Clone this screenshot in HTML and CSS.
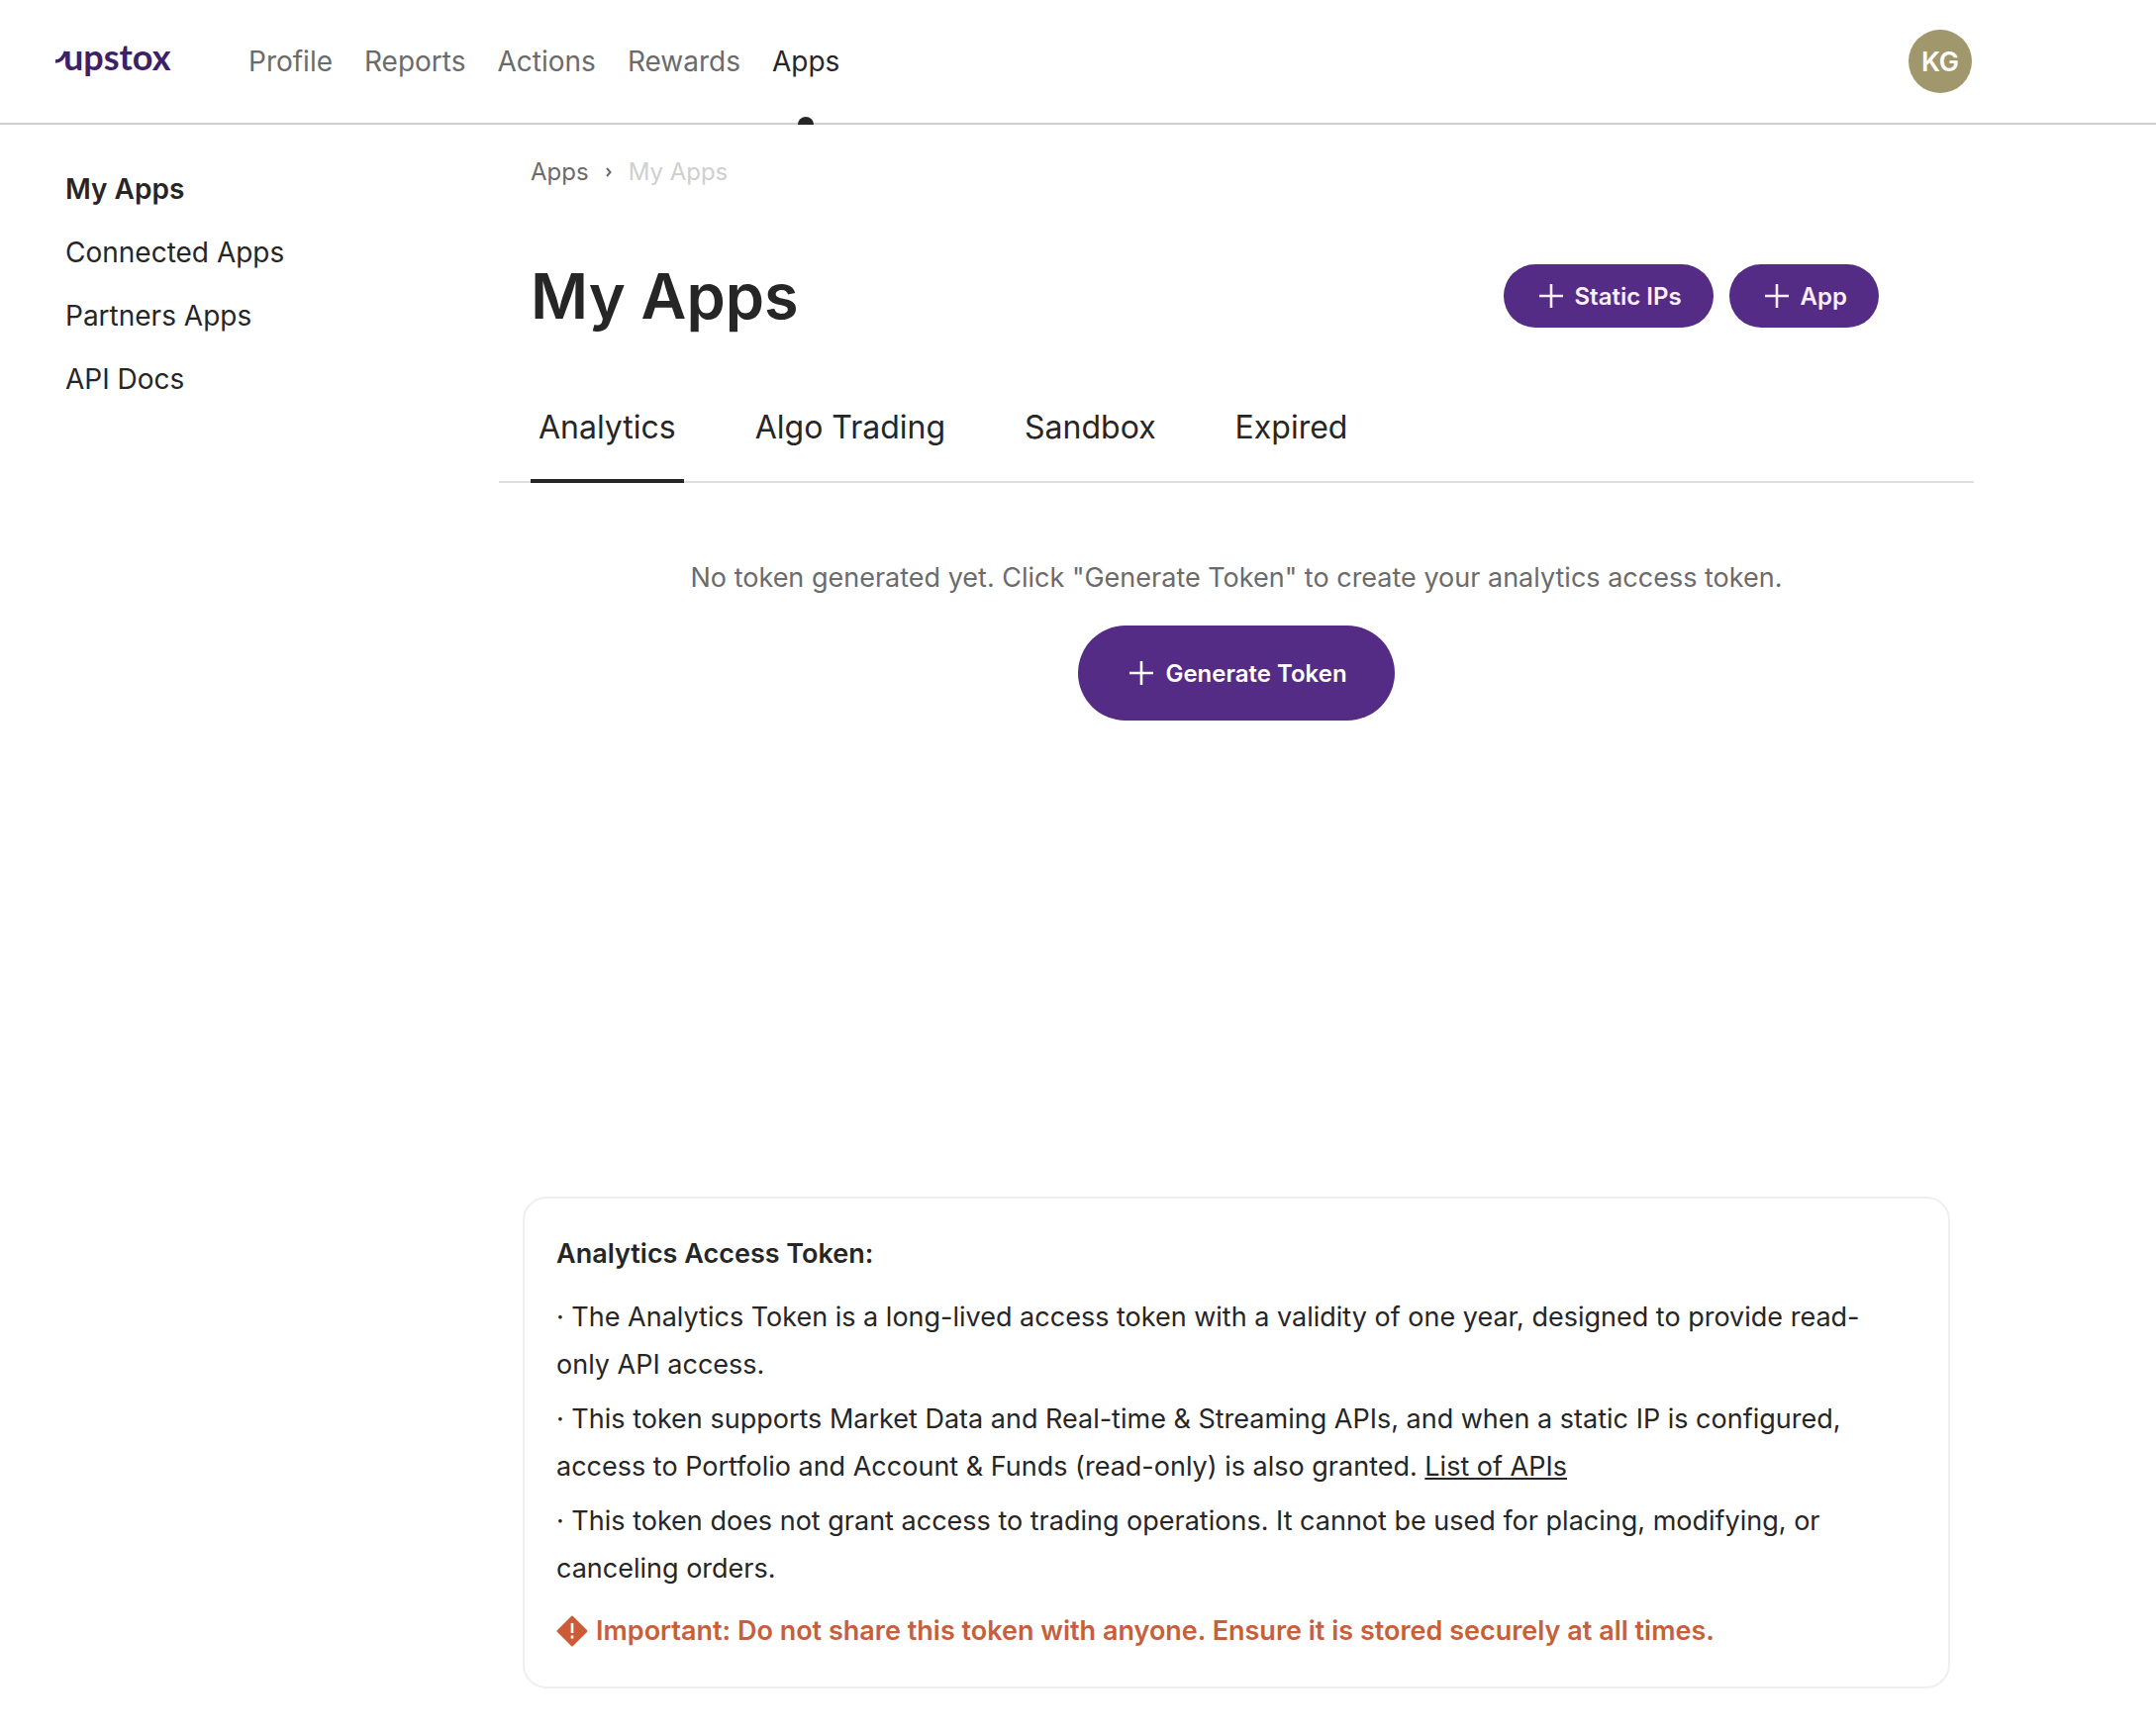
FILE: index.html
```html
<!DOCTYPE html>
<html lang="en">
<head>
  <meta charset="UTF-8" />
  <meta name="viewport" content="width=device-width, initial-scale=1.0"/>
  <title>My Apps - Upstox</title>
  <link rel="stylesheet" href="styles.css">
</head>
<body>

  <header class="topbar">
    <a href="#" class="logo" aria-label="upstox home">
      <svg width="128" height="56" viewBox="0 0 128 56">
        <path d="M1 28 C6.5 28 9.5 24 11.5 18" fill="none" stroke="#3c2167" stroke-width="3.6" />
        <text x="9" y="37" class="logo-text">upstox</text>
      </svg>
    </a>
    <nav class="main-nav">
      <a href="#">Profile</a>
      <a href="#">Reports</a>
      <a href="#">Actions</a>
      <a href="#">Rewards</a>
      <a href="#" class="active">Apps</a>
    </nav>
    <button type="button" class="avatar">KG</button>
  </header>

  <div class="page">
    <aside class="sidebar">
      <a href="#" class="current">My Apps</a>
      <a href="#">Connected Apps</a>
      <a href="#">Partners Apps</a>
      <a href="#">API Docs</a>
    </aside>

    <main class="content">
      <nav class="breadcrumb">
        <a href="#">Apps</a>
        <svg width="6" height="10" viewBox="0 0 6 10"><path d="M1 1 L4.5 5 L1 9" fill="none" stroke="#6b6b6b" stroke-width="2" /></svg>
        <span>My Apps</span>
      </nav>

      <div class="title-row">
        <h1>My Apps</h1>
        <div class="actions">
          <button type="button" class="btn">
            <svg class="plus" width="24" height="24" viewBox="0 0 24 24"><path d="M12 0 V24 M0 12 H24" /></svg>
            Static IPs
          </button>
          <button type="button" class="btn">
            <svg class="plus" width="24" height="24" viewBox="0 0 24 24"><path d="M12 0 V24 M0 12 H24" /></svg>
            App
          </button>
        </div>
      </div>

      <div class="tabs" role="tablist">
        <button type="button" role="tab" class="tab selected" aria-selected="true">Analytics</button>
        <button type="button" role="tab" class="tab">Algo Trading</button>
        <button type="button" role="tab" class="tab">Sandbox</button>
        <button type="button" role="tab" class="tab">Expired</button>
      </div>

      <section class="panel">
        <p>No token generated yet. Click "Generate Token" to create your analytics access token.</p>
        <button type="button" class="btn btn-large">
          <svg class="plus" width="24" height="24" viewBox="0 0 24 24"><path d="M12 0 V24 M0 12 H24" /></svg>
          Generate Token
        </button>
      </section>

      <section class="info-card">
        <h2>Analytics Access Token:</h2>
        <p>· The Analytics Token is a long-lived access token with a validity of one year, designed to provide read-only API access.</p>
        <p>· This token supports Market Data and Real-time &amp; Streaming APIs, and when a static IP is configured, access to Portfolio and Account &amp; Funds (read-only) is also granted. <a href="#">List of APIs</a></p>
        <p>· This token does not grant access to trading operations. It cannot be used for placing, modifying, or canceling orders.</p>
        <div class="warning">
          <svg width="32" height="32" viewBox="0 0 32 32">
            <path d="M16 1.5 L30.5 16 L16 30.5 L1.5 16 Z" fill="#cb5c37" stroke="#cb5c37" stroke-width="2" stroke-linejoin="round" />
            <path d="M16 8 V18 M16 20.5 V23.5" stroke="#fff" stroke-width="2.6" />
          </svg>
          Important: Do not share this token with anyone. Ensure it is stored securely at all times.
        </div>
      </section>
    </main>
  </div>

</body>
</html>
```

FILE: styles.css
```css
* {
  box-sizing: border-box;
}

body {
  margin: 0;
  font-family: Inter, "Liberation Sans", sans-serif;
  font-size: 27px;
  color: #262626;
  background: #fff;
}

a {
  color: inherit;
  text-decoration: none;
}

button {
  font-family: inherit;
  border: none;
  cursor: pointer;
}

/* Top bar */
.topbar {
  display: flex;
  align-items: center;
  height: 126px;
  padding: 0 186px 0 55px;
  border-bottom: 2px solid #cfcfcf;
}

.logo {
  display: flex;
  width: 196px;
}

.logo-text {
  font-family: Lato, sans-serif;
  font-size: 36px;
  font-weight: 700;
  fill: #3c2167;
}

.main-nav {
  display: flex;
  flex: 1;
  gap: 32px;
  font-size: 28px;
  color: #6b6b6b;
}

.main-nav a {
  position: relative;
  line-height: 124px;
}

.main-nav .active {
  color: #262626;
}

/* half dot sitting on the header border */
.main-nav .active::after {
  content: "";
  position: absolute;
  left: 50%;
  bottom: -2px;
  width: 16px;
  height: 8px;
  margin-left: -8px;
  border-radius: 8px 8px 0 0;
  background: #262626;
}

.avatar {
  width: 64px;
  height: 64px;
  padding: 0;
  border-radius: 50%;
  background: #a0976c;
  color: #fff;
  font-size: 27px;
  font-weight: 600;
}

/* Page layout */
.page {
  display: grid;
  grid-template-columns: 504px 1fr;
  padding-right: 184px;
}

.sidebar {
  display: flex;
  flex-direction: column;
  padding: 33px 0 0 66px;
  font-size: 28px;
  line-height: 64px;
}

.sidebar .current {
  font-weight: 600;
}

.breadcrumb {
  display: flex;
  align-items: center;
  gap: 17px;
  padding: 32px 0 0 32px;
  line-height: 32px;
  font-size: 24px;
  color: #6b6b6b;
}

.breadcrumb span {
  color: #cfcfcf;
}

.title-row {
  display: flex;
  align-items: center;
  justify-content: space-between;
  padding: 64px 96px 0 32px;
}

h1 {
  margin: 0;
  font-size: 63px;
  font-weight: 600;
  line-height: 90px;
}

.actions {
  display: flex;
  gap: 16px;
}

.btn {
  display: flex;
  align-items: center;
  gap: 12px;
  height: 64px;
  padding: 0 32px 0 36px;
  border-radius: 48px;
  background: #542b85;
  color: #fceefb;
  font-size: 24px;
  font-weight: 600;
}

.btn-large {
  height: 96px;
  padding: 0 48px 0 52px;
  color: #fff;
}

.plus {
  fill: none;
  stroke: currentColor;
  stroke-width: 2.6;
}

/* Tabs */
.tabs {
  display: flex;
  gap: 64px;
  padding: 0 32px;
  margin-top: 34px;
  border-bottom: 2px solid #dedede;
}

.tab {
  height: 110px;
  margin-bottom: -2px;
  padding: 0 8px;
  border-bottom: 4px solid transparent;
  background: none;
  color: #262626;
  font-size: 32px;
}

.tab.selected {
  border-bottom-color: #262626;
}

.panel {
  display: flex;
  flex-direction: column;
  align-items: center;
  gap: 24px;
  min-height: 721px;
  padding-top: 72px;
}

.panel p {
  margin: 0;
  line-height: 48px;
  color: #6b6b6b;
}

/* Info card */
.info-card {
  margin: 0 24px 48px;
  padding: 32px 40px 32px 32px;
  border: 2px solid #efefef;
  border-radius: 24px;
  line-height: 48px;
}

.info-card h2 {
  margin: 0 0 16px;
  font-size: 27px;
  font-weight: 600;
}

.info-card p {
  margin: 0 0 7px;
}

.info-card p a {
  text-decoration: underline;
}

.warning {
  display: flex;
  align-items: center;
  gap: 8px;
  margin-top: 15px;
  color: #c6603b;
  font-weight: 600;
}
```
